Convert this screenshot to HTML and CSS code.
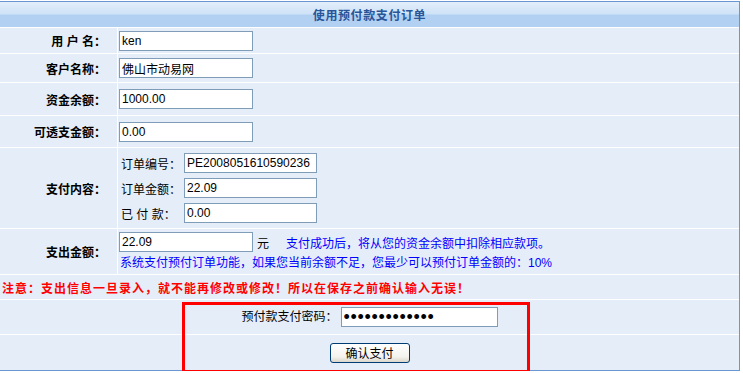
FILE: index.html
```html
<!DOCTYPE html>
<html lang="zh-CN">
	<head>
		<meta charset="UTF-8" />
		<meta name="viewport" content="width=device-width, initial-scale=1.0" />
		<title>使用预付款支付订单</title>
		<link rel="stylesheet" href="styles.css">
	</head>
	<body>
		<div class="wrap">
			<table class="pay">
				<tr>
					<th colspan="2" class="title">使用预付款支付订单</th>
				</tr>
				<tr class="r1">
					<td class="label">用 户 名：</td>
					<td class="field"><input class="txt" type="text" value="ken"></td>
				</tr>
				<tr class="r2">
					<td class="label">客户名称：</td>
					<td class="field"><input class="txt" type="text" value="佛山市动易网"></td>
				</tr>
				<tr class="r3">
					<td class="label">资金余额：</td>
					<td class="field"><input class="txt" type="text" value="1000.00"></td>
				</tr>
				<tr class="r4">
					<td class="label">可透支金额：</td>
					<td class="field"><input class="txt" type="text" value="0.00"></td>
				</tr>
				<tr class="r5">
					<td class="label">支付内容：</td>
					<td class="field">
						<table class="order">
							<tr>
								<td class="olabel">订单编号：</td>
								<td class="oinput"><input class="txt" type="text" value="PE2008051610590236"></td>
							</tr>
							<tr>
								<td class="olabel">订单金额：</td>
								<td class="oinput"><input class="txt" type="text" value="22.09"></td>
							</tr>
							<tr>
								<td class="olabel">已 付 款：</td>
								<td class="oinput"><input class="txt" type="text" value="0.00"></td>
							</tr>
						</table>
					</td>
				</tr>
				<tr class="r6">
					<td class="label">支出金额：</td>
					<td class="field top">
						<div class="line">
							<input class="txt" type="text" value="22.09">
							<span class="unit">元</span>
							<span class="hint">支付成功后，将从您的资金余额中扣除相应款项。</span>
						</div>
						<div class="hint second">系统支付预付订单功能，如果您当前余额不足，您最少可以预付订单金额的：10%</div>
					</td>
				</tr>
				<tr class="r7">
					<td colspan="2" class="warn">注意：支出信息一旦录入，就不能再修改或修改！所以在保存之前确认输入无误！</td>
				</tr>
				<tr class="r8">
					<td colspan="2" class="center">预付款支付密码：<input class="txt pwd" type="password" value="1234567890123"></td>
				</tr>
				<tr class="r9">
					<td colspan="2" class="center last"><button class="btn" type="button">确认支付</button></td>
				</tr>
			</table>
			<div class="mark"></div>
		</div>
	</body>
</html>
```

FILE: styles.css
```css
*{
	padding: 0;
	margin: 0;
	box-sizing: border-box;
}
body {
	font: 12px "Liberation Sans", "Noto Sans CJK SC", sans-serif;
	color: #000;
	background: #fff;
}
.wrap {
	position: relative;
	padding-top: 1px;
	width: 743px;
}
table.pay {
	width: 740px;
	border-collapse: separate;
	border-spacing: 0;
	border: 1px solid #6a97d2;
	border-left: 0;
	background-color: #e5eef8;
}
table.pay > tbody > tr > td,
table.pay > tbody > tr > th {
	border-bottom: 1px solid #fff;
	padding: 0 1px;
	vertical-align: middle;
}
table.pay td.last {
	border-bottom: 0;
}
th.title {
	height: 26px;
	font-weight: bold;
	color: #2a5598;
	text-align: center;
	letter-spacing: 0.6px;
	padding-bottom: 1px !important;
	background: linear-gradient(#e3eefa, #cfe2f7 48%, #b2d0f2 52%, #b2d0f2);
}
td.label {
	width: 118px;
	border-right: 1px solid #fff;
	text-align: right;
	padding-right: 11px !important;
	font-weight: bold;
	white-space: nowrap;
}
.r1 td { height: 26px; }
.r2 td { height: 29px; }
.r3 td { height: 33px; }
.r4 td { height: 32px; }
.r5 td { height: 81px; }
.r6 td { height: 46px; }
.r7 td { height: 25px; }
.r8 td { height: 35px; }
.r9 td { height: 35px; }

input.txt {
	width: 134px;
	height: 20px;
	border: 1px solid #7f9db9;
	background: #fff;
	padding: 0 2px;
	font: 12px "Liberation Sans", "Noto Sans CJK SC", sans-serif;
	color: #000;
	vertical-align: middle;
}
table.order {
	border-collapse: collapse;
}
table.order td {
	height: 25px;
	vertical-align: middle;
}
td.olabel {
	padding: 0 2px;
	white-space: nowrap;
}
td.oinput {
	padding-left: 1px;
}
table.order input.txt {
	width: 133px;
}
td.top {
	vertical-align: top !important;
	padding-top: 3px !important;
}
.line {
	display: flex;
	align-items: center;
	height: 20px;
}
.unit {
	margin-left: 4px;
}
.hint {
	color: #0000ff;
}
.line .hint {
	margin-left: 17px;
}
.hint.second {
	margin-top: 4px;
	line-height: 14px;
	padding-left: 1px;
}
td.warn {
	color: #ff0000;
	font-weight: bold;
	letter-spacing: 1px;
	padding-left: 2px !important;
	white-space: nowrap;
}
td.center {
	text-align: center;
	white-space: nowrap;
}
input.pwd {
	width: 157px;
	margin-left: 3px;
	font-size: 18px;
	letter-spacing: 0.7px;
}
.btn {
	width: 80px;
	height: 20px;
	font: 12px "Liberation Sans", "Noto Sans CJK SC", sans-serif;
	color: #000;
	border: 1px solid #003c74;
	border-radius: 3px;
	background: linear-gradient(#ffffff, #f4f3ee 70%, #dcd7cb);
	vertical-align: middle;
}
.mark {
	position: absolute;
	left: 182px;
	top: 302px;
	width: 348px;
	height: 71px;
	border: 3px solid #ff0000;
}
```
